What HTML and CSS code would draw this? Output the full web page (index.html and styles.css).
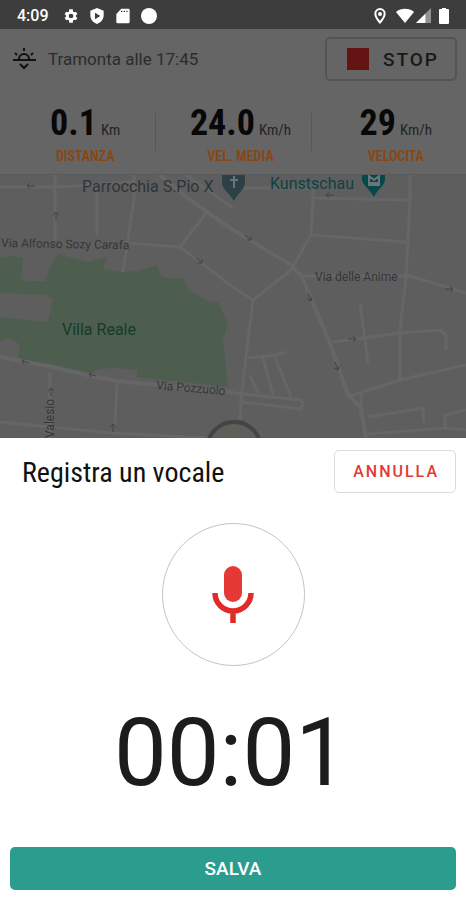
FILE: index.html
```html
<!DOCTYPE html>
<html lang="it">
<head>
  <meta charset="UTF-8">
  <meta name="viewport" content="width=device-width, initial-scale=1">
  <title>Registra un vocale</title>
  <link rel="stylesheet" href="styles.css">
</head>
<body>

  <div class="status-bar">
    <span class="clock">4:09</span>
    <svg class="status-icon" viewBox="0 0 24 24"><path fill-rule="evenodd" d="M19.4 13a7.500 7.500 0 0 0 0-2l2.200-1.700-2.200-3.800-2.600 1a7.500 7.500 0 0 0-1.700-1L14.700 2h-5.400l-.4 3.500a7.500 7.500 0 0 0-1.700 1l-2.600-1-2.200 3.800L4.600 11a7.500 7.500 0 0 0 0 2l-2.200 1.700 2.200 3.800 2.600-1a7.500 7.500 0 0 0 1.700 1l.4 3.500h5.400l.4-3.500a7.500 7.500 0 0 0 1.700-1l2.600 1 2.200-3.800zM12 15.500a3.500 3.500 0 1 1 0-7 3.500 3.500 0 0 1 0 7z"/></svg>
    <svg class="status-icon" viewBox="0 0 24 24"><path fill-rule="evenodd" d="M12 0 2 4v7c0 6 4 11 10 13 6-2 10-7 10-13V4zM9 7l8 5-8 5z"/></svg>
    <svg class="status-icon" viewBox="0 0 24 24"><path fill-rule="evenodd" d="M9.500 1H20a2 2 0 0 1 2 2v18a2 2 0 0 1-2 2H4a2 2 0 0 1-2-2V9zM9 4v2h2V4zm4 0v2h2V4zm4 0v2h2V4z"/></svg>
    <svg class="status-icon" viewBox="0 0 24 24"><circle cx="12" cy="12" r="12"/></svg>
    <span class="spacer"></span>
    <svg class="status-icon" viewBox="0 0 24 24"><path fill-rule="evenodd" d="M12 0a8.500 8.500 0 0 0-8.500 8.500C3.500 15 12 24 12 24s8.500-9 8.500-15.500A8.500 8.500 0 0 0 12 0zm0 3a5.500 5.500 0 0 1 5.500 5.500c0 3.500-3 7.500-5.500 10.500-2.500-3-5.500-7-5.500-10.500A5.500 5.500 0 0 1 12 3z"/><circle cx="12" cy="9" r="3"/></svg>
    <svg class="wifi-icon" viewBox="0 0 18 16"><path d="M0 4a14 14 0 0 1 18 0L9 15z"/></svg>
    <svg class="signal-icon" viewBox="0 0 16 16"><path fill="#929292" d="M16 0v16H0z"/><path d="M10 6v10H0z"/></svg>
    <svg class="battery-icon" viewBox="0 0 10 16"><path d="M3 0h4v1h2a1 1 0 0 1 1 1v13a1 1 0 0 1-1 1H1a1 1 0 0 1-1-1V2a1 1 0 0 1 1-1h2z"/></svg>
  </div>

  <header class="ride">
    <div class="ride-top">
      <svg class="sunset-icon" viewBox="0 0 24 24"><path d="M1 13h23M7 13v-1a5 5 0 0 1 10 0v1M8 17l4 4 4-4M12 1v3M3 6l2 2M21 6l-2 2"/></svg>
      <span class="sunset">Tramonta alle 17:45</span>
      <button class="stop" type="button"><span class="stop-square"></span>STOP</button>
    </div>
    <div class="stats">
      <div class="stat">
        <div><span class="value">0.1</span> <span class="unit">Km</span></div>
        <div class="label">DISTANZA</div>
      </div>
      <div class="stat">
        <div><span class="value">24.0</span> <span class="unit">Km/h</span></div>
        <div class="label">VEL. MEDIA</div>
      </div>
      <div class="stat">
        <div><span class="value">29</span> <span class="unit">Km/h</span></div>
        <div class="label">VELOCITA</div>
      </div>
    </div>
  </header>

  <div class="map">
    <svg viewBox="0 175 466 263" preserveAspectRatio="xMidYMin slice">
      <!-- park -->
      <path class="park" d="M0 257h4l6-1 13 2-2 20 7 3h17l5-14 8-13 29 8 20-5-4 12 20 3 14-1 20-6 3 10 8 4 15-1 6 13 21 11h8l10 21-5 17 5 47-91-10v-7l-24-2-13 1-13 4-34-7-35-8 2-13-7-6H3l-3 3v-25l48 5 5-22-6-5-47-2z"/>
      <!-- minor streets -->
      <path class="street" d="M55 175v65M97 186v49M134 175v25l-11 72M0 187h58l76-5M127 243l53 4 27-35M180 247l53 40 20 13M253 300l38-30 20-35 2-35v-14M311 235l95 7M313 198l97 2M235 188h74M410 175v25l-4 77-6 53v50M253 300l-7 57-5 43-1 24M303 276h107l56 17M333 342l67-9 40-3 6 5v15M360 303l8 60M348 395h5l47-15 66-15M361 393v24M368 417l55-9 1 15M368 434l78-6 20 2M445 427v-12l21-5M248 358l28-3 10-3M250 375l8 18M263 358l10 37M275 357l16 40M233 393l68 7 2 4-2 5-60-7M50 373v65M117 381l-2 46M0 422l110 11 100 5"/>
      <!-- main streets -->
      <path class="street main" d="M160 175l30 25 43 30 58 35 11 12 28 66 18 52 13 13 5 30M0 357l53 10 34 8 30 6 116 11"/>
      <path class="street" d="M186 175l47 33"/>
      <path class="arrow" d="M35 186h-8m3-3-3 3 3 3M56 220v-8m-3 3 3-3 3 3M196 258l6 5m-4 0h4v-4M245 235l6 5m-4 0h4v-4M308 293l3 8m-4-2 4 2 1-4M348 339h8m-3-3 3 3-3 3M445 289h8m-3-3 3 3-3 3M335 362l3 8m-4-2 4 2 1-4M29 363l-7-2m3-2-3 2 2 3M96 376l-7-2m3-2-3 2 2 3M51 396v-8m-3 3 3-3 3 3M113 432v-8m-3 3 3-3 3 3M334 195h-8m3-3-3 3 3 3"/>

      <!-- pins -->
      <path class="pin-church" d="M222 175h23v8c0 6-8 11-11 18-4-7-12-12-12-18z"/>
      <path class="pin-mark" d="M234 176v12M230 180h8"/>
      <path class="pin-museum" d="M362 175h23v4c0 7-7 9-11 18-5-9-12-12-12-18z"/>
      <path class="pin-mark" d="M369 183v-7l5 4 5-4v7zM368 185h12"/>

      <text class="place" x="82" y="192">Parrocchia S.Pio X</text>
      <text class="place museum" x="270" y="189">Kunstschau</text>
      <text class="place green" x="62" y="335">Villa Reale</text>
      <text class="road" x="1" y="247" transform="rotate(1 1 247)">Via Alfonso Sozy Carafa</text>
      <text class="road" x="315" y="281">Via delle Anime</text>
      <text class="road" x="156" y="389" transform="rotate(5 156 389)">Via Pozzuolo</text>
      <text class="road" x="54" y="438" transform="rotate(-90 54 438)">Valesio</text>
      <circle class="position" cx="234" cy="449" r="27"/>
      <path class="arrow" d="M238 421h6"/>
    </svg>
  </div>

  <main class="sheet">
    <div class="sheet-head">
      <h1>Registra un vocale</h1>
      <button class="cancel" type="button">ANNULLA</button>
    </div>
    <button class="mic" type="button" aria-label="Microfono">
      <svg viewBox="0 0 42 58"><rect x="12" y="0" width="18" height="36" rx="9" fill="#e53935"/><path d="M3 27a18 18 0 0 0 36 0M21 45v12" fill="none" stroke="#e02a28" stroke-width="5.500"/></svg>
    </button>
    <div class="timer">00:01</div>
    <button class="save" type="button">SALVA</button>
  </main>

</body>
</html>
```

FILE: styles.css
```css
* {
  box-sizing: border-box;
}
body {
  margin: 0;
  min-height: 100vh;
  display: flex;
  flex-direction: column;
  font-family: Roboto, "Liberation Sans", sans-serif;
  background: #fff;
}
button {
  font-family: inherit;
  cursor: pointer;
}

/* status bar */
.status-bar {
  display: flex;
  align-items: center;
  gap: 10px;
  height: 29px;
  padding: 2px 17px 0;
  background: #3d3d3d;
  color: #fff;
}
.status-bar svg {
  fill: #fff;
}
.clock {
  padding-right: 4px;
  font-size: 16px;
  font-weight: 500;
}
.status-icon {
  width: 16px;
  height: 16px;
}
.spacer {
  flex: 1;
}
.wifi-icon {
  width: 18px;
  height: 16px;
  margin-left: -2px;
}
.signal-icon {
  width: 15px;
  height: 15px;
  margin-left: -8px;
}
.battery-icon {
  width: 10px;
  height: 16px;
  margin-left: -2px;
}

/* ride info */
.ride {
  background: #656565;
  border-bottom: 1px solid #5a5a5a;
  padding: 8px 9px 7px 12px;
}
.ride-top {
  display: flex;
  align-items: center;
}
.sunset-icon {
  width: 24px;
  height: 24px;
  fill: none;
  stroke: #111;
  stroke-width: 2;
}
.sunset {
  flex: 1;
  padding-left: 12px;
  font-size: 17px;
  color: #2c2c2c;
}
.stop {
  display: flex;
  align-items: center;
  gap: 14px;
  height: 44px;
  padding: 0 16px 0 20px;
  background: none;
  border: 2px solid #545454;
  border-radius: 5px;
  color: #191919;
  font-size: 19px;
  font-weight: 500;
  letter-spacing: 2px;
}
.stop-square {
  width: 22px;
  height: 22px;
  background: #651414;
}
.stats {
  display: grid;
  grid-template-columns: repeat(3, 1fr);
  margin: 20px -9px 0 -12px;
}
.stat {
  position: relative;
  padding-left: 15px;
  text-align: center;
  white-space: nowrap;
}
.stat + .stat::before {
  content: "";
  position: absolute;
  left: 0;
  top: 12px;
  height: 38px;
  border-left: 1px solid #575757;
}
.value {
  font-family: "Roboto Condensed", Roboto, sans-serif;
  font-size: 36px;
  line-height: 44px;
  font-weight: 700;
  color: #080808;
}
.unit {
  font-family: "Roboto Condensed", Roboto, sans-serif;
  font-size: 15px;
  color: #242424;
}
.label {
  font-family: "Roboto Condensed", Roboto, sans-serif;
  font-size: 14px;
  line-height: 22px;
  font-weight: 600;
  color: #8a4612;
}

/* map */
.map {
  flex: 1 1 0;
  min-height: 200px;
  position: relative;
  background: #5e5e5e;
  overflow: hidden;
}
.map svg {
  position: absolute;
  inset: 0;
  width: 100%;
  height: 100%;
}
.park {
  fill: #4d5e4e;
}
.street {
  fill: none;
  stroke: #666;
  stroke-width: 3;
  stroke-linejoin: round;
}
.main {
  stroke-width: 4;
}
.arrow {
  fill: none;
  stroke: #424242;
  stroke-width: 1;
}
.place {
  font-size: 16px;
  fill: #2d3539;
}
.museum {
  fill: #12413f;
}
.green {
  fill: #143b29;
}
.road {
  font-size: 12px;
  fill: #363636;
}
.pin-church {
  fill: #2c4046;
}
.pin-museum {
  fill: #07484c;
}
.pin-mark {
  fill: none;
  stroke: #6c7678;
  stroke-width: 2;
}
.position {
  fill: #5e5e5b;
  stroke: #444;
  stroke-width: 4;
}

/* recording sheet */
.sheet {
  display: flex;
  flex-direction: column;
  align-items: center;
  padding: 12px 10px 10px;
  background: #fff;
}
.sheet-head {
  align-self: stretch;
  display: flex;
  align-items: center;
  justify-content: space-between;
  padding-left: 12px;
}
h1 {
  margin: 0;
  padding-top: 3px;
  font-family: "Roboto Condensed", Roboto, sans-serif;
  font-size: 28px;
  line-height: 40px;
  font-weight: 400;
  color: #111;
}
.cancel {
  height: 43px;
  padding: 0 16px 0 18px;
  background: #fff;
  border: 1px solid #dcdcdc;
  border-radius: 5px;
  color: #e53935;
  font-size: 16px;
  font-weight: 500;
  letter-spacing: 2px;
}
.mic {
  display: flex;
  align-items: center;
  justify-content: center;
  width: 143px;
  height: 143px;
  margin-top: 30px;
  padding: 0;
  background: #fff;
  border: 1px solid #c4c4c4;
  border-radius: 50%;
}
.mic svg {
  width: 42px;
  height: 58px;
}
.timer {
  margin-top: 31px;
  padding-right: 4px;
  font-size: 94px;
  line-height: 112px;
  color: #1c1c1c;
}
.save {
  align-self: stretch;
  height: 43px;
  margin-top: 38px;
  background: #2a9d8f;
  border: none;
  border-radius: 5px;
  color: #fff;
  font-size: 19px;
  font-weight: 500;
}
```
